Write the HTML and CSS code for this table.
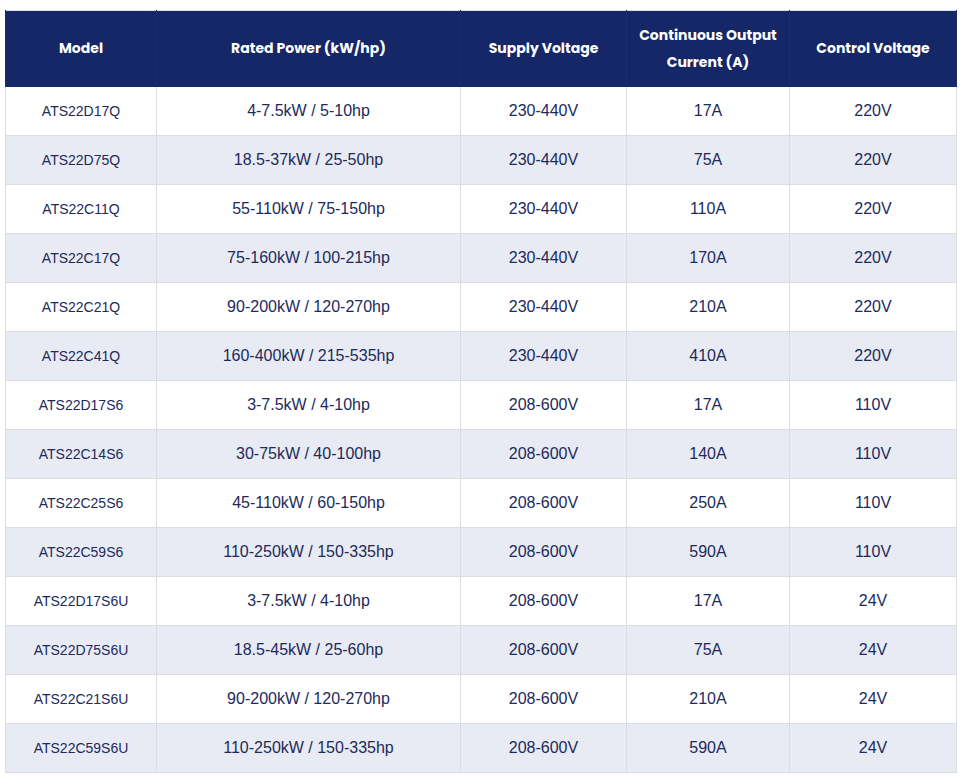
FILE: index.html
```html
<!DOCTYPE html>
<html lang="en">
<head>
<meta charset="utf-8">
<title>ATS22 Specifications</title>
<link rel="stylesheet" href="styles.css">
</head>
<body>
<div class="wrap">
<table class="spec">
<colgroup>
<col class="c1"><col class="c2"><col class="c3"><col class="c4"><col class="c5">
</colgroup>
<thead>
<tr><th>Model</th><th>Rated Power (kW/hp)</th><th>Supply Voltage</th><th>Continuous Output<br>Current (A)</th><th>Control Voltage</th></tr>
</thead>
<tbody>
<tr><td class="m">ATS22D17Q</td><td>4-7.5kW / 5-10hp</td><td>230-440V</td><td>17A</td><td>220V</td></tr>
<tr><td class="m">ATS22D75Q</td><td>18.5-37kW / 25-50hp</td><td>230-440V</td><td>75A</td><td>220V</td></tr>
<tr><td class="m">ATS22C11Q</td><td>55-110kW / 75-150hp</td><td>230-440V</td><td>110A</td><td>220V</td></tr>
<tr><td class="m">ATS22C17Q</td><td>75-160kW / 100-215hp</td><td>230-440V</td><td>170A</td><td>220V</td></tr>
<tr><td class="m">ATS22C21Q</td><td>90-200kW / 120-270hp</td><td>230-440V</td><td>210A</td><td>220V</td></tr>
<tr><td class="m">ATS22C41Q</td><td>160-400kW / 215-535hp</td><td>230-440V</td><td>410A</td><td>220V</td></tr>
<tr><td class="m">ATS22D17S6</td><td>3-7.5kW / 4-10hp</td><td>208-600V</td><td>17A</td><td>110V</td></tr>
<tr><td class="m">ATS22C14S6</td><td>30-75kW / 40-100hp</td><td>208-600V</td><td>140A</td><td>110V</td></tr>
<tr><td class="m">ATS22C25S6</td><td>45-110kW / 60-150hp</td><td>208-600V</td><td>250A</td><td>110V</td></tr>
<tr><td class="m">ATS22C59S6</td><td>110-250kW / 150-335hp</td><td>208-600V</td><td>590A</td><td>110V</td></tr>
<tr><td class="m">ATS22D17S6U</td><td>3-7.5kW / 4-10hp</td><td>208-600V</td><td>17A</td><td>24V</td></tr>
<tr><td class="m">ATS22D75S6U</td><td>18.5-45kW / 25-60hp</td><td>208-600V</td><td>75A</td><td>24V</td></tr>
<tr><td class="m">ATS22C21S6U</td><td>90-200kW / 120-270hp</td><td>208-600V</td><td>210A</td><td>24V</td></tr>
<tr><td class="m">ATS22C59S6U</td><td>110-250kW / 150-335hp</td><td>208-600V</td><td>590A</td><td>24V</td></tr>
</tbody>
</table>
</div>
</body>
</html>
```
FILE: styles.css
```css
html, body {
  margin: 0;
  padding: 0;
  background: #ffffff;
}
.wrap {
  padding: 10px 0 0 5px;
}
.spec {
  width: 951px;
  border-collapse: collapse;
  table-layout: fixed;
  border: 1px solid #dcdde3;
  font-family: "Liberation Sans", Arial, sans-serif;
  color: #1c2a5c;
}
.c1 { width: 151px; }
.c2 { width: 304px; }
.c3 { width: 166px; }
.c4 { width: 163px; }
.c5 { width: 167px; }
.spec th {
  background: #152766;
  color: #ffffff;
  font-family: "Poppins", "Inter", "Open Sans", sans-serif;
  font-weight: 700;
  font-size: 14px;
  line-height: 27px;
  height: 75px;
  padding: 0 6px;
  text-align: center;
  vertical-align: middle;
  border-left: 1px solid #1a2c6c;
  border-right: 1px solid #1a2c6c;
  border-bottom: 1px solid #152766;
}
.spec td {
  height: 48px;
  padding: 0 6px;
  text-align: center;
  vertical-align: middle;
  font-size: 16px;
  border-left: 1px solid #dcdde3;
  border-right: 1px solid #dcdde3;
  border-bottom: 1px solid #dcdde3;
}
.spec td.m {
  font-size: 14px;
}
.spec tbody tr:nth-child(even) td {
  background: #e8ebf3;
}
```
